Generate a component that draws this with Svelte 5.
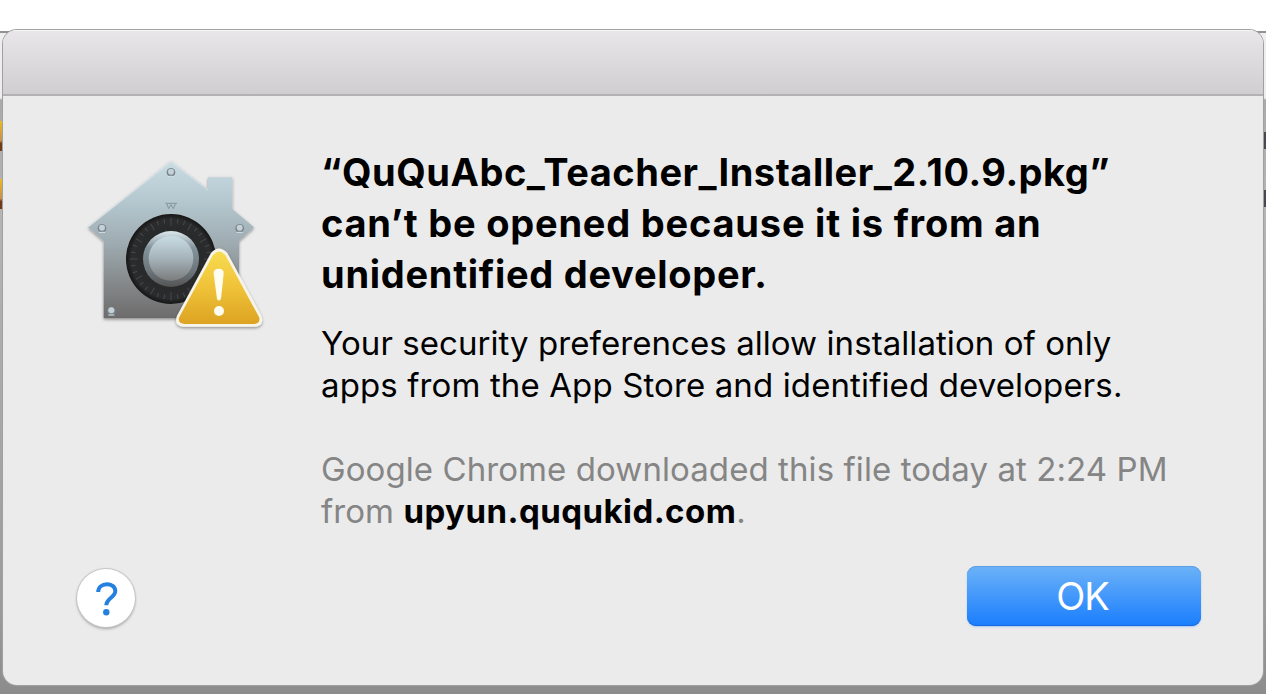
<script>
  const title = [
    { text: '“QuQuAbc_Teacher_Installer_2.10.9.pkg”', ls: 0.53 },
    { text: 'can’t be opened because it is from an', ls: 0.79 },
    { text: 'unidentified developer.', ls: 0.72 },
  ];
  const body = [
    { text: 'Your security preferences allow installation of only', ls: 0.07 },
    { text: 'apps from the App Store and identified developers.', ls: 0.12 },
  ];
  const ticks = Array.from({ length: 36 }, (_, i) => i * 10);
  const screws = [[303, 82], [96, 250], [509, 250], [124, 498]];
</script>

<div class="desktop">
  <div class="edge left"><i></i><i></i></div>
  <div class="edge right"><i></i><i></i></div>
  <div class="dialog">
    <div class="titlebar"></div>
    <div class="content">
      <svg class="icon" viewBox="0 0 630 600" aria-hidden="true">
        <defs>
          <linearGradient id="house" x1="0" y1="0" x2="0" y2="1">
            <stop offset="0" stop-color="#cbdce3" />
            <stop offset=".25" stop-color="#b5c8cf" />
            <stop offset=".5" stop-color="#a0aeb4" />
            <stop offset=".78" stop-color="#85888a" />
            <stop offset="1" stop-color="#6c6b6b" />
          </linearGradient>
          <linearGradient id="rim" x1="0" y1="0" x2="0" y2="1">
            <stop offset="0" stop-color="#dce9ef" />
            <stop offset=".3" stop-color="#83939b" />
            <stop offset=".7" stop-color="#6d777c" />
            <stop offset="1" stop-color="#545454" />
          </linearGradient>
          <linearGradient id="knob" x1="0" y1="0" x2="0" y2="1">
            <stop offset="0" stop-color="#c9dce4" />
            <stop offset=".5" stop-color="#a5b3ba" />
            <stop offset="1" stop-color="#7c7c7d" />
          </linearGradient>
          <linearGradient id="warn" x1="0" y1="0" x2="0" y2="1">
            <stop offset="0" stop-color="#f8dc50" />
            <stop offset=".5" stop-color="#efc238" />
            <stop offset="1" stop-color="#dda322" />
          </linearGradient>
          <radialGradient id="dial">
            <stop offset="0" stop-color="#222" />
            <stop offset=".88" stop-color="#2b2c2d" />
            <stop offset="1" stop-color="#151515" />
          </radialGradient>
          <filter id="shade" x="-10%" y="-10%" width="120%" height="125%">
            <feDropShadow dx="0" dy="4" stdDeviation="5" flood-color="#000" flood-opacity=".4" />
          </filter>
        </defs>
        <path d="M303 49 L414 133 V97 H487 V192 L552 247 L507 287 V520 H101 V287 L54 247 Z" fill="url(#house)" filter="url(#shade)" />
        <path d="M56 245 L303 51 L414 135" fill="none" stroke="#dce7ec" stroke-width="3" opacity=".7" />
        <path d="M286 175 H321 M291 177 L296 191 L303 179 L310 191 L316 177" fill="none" stroke="#84949b" stroke-width="3" />
        {#each screws as [x, y]}
          <circle cx={x} cy={y} r="13" fill="#75848b" />
          <circle cx={x} cy={y - 2} r="9" fill="#c6d1d6" />
          <path d="M{x - 9} {y + 12} H{x + 9}" stroke="#dfe6e9" stroke-width="3" />
        {/each}
        <circle cx="303" cy="342" r="135" fill="url(#dial)" />
        {#each ticks as a}
          <path d="M303 {a % 90 === 0 ? 218 : 220} V{a % 30 === 0 ? 242 : 234}" stroke="#46494b" stroke-width="3" transform="rotate({a} 303 342)" />
        {/each}
        <circle cx="303" cy="342" r="84" fill="url(#rim)" />
        <circle cx="303" cy="340" r="67" fill="url(#knob)" />
        <path d="M423 324 Q447 297 472 324 L574 512 Q584 542 556 545 H340 Q310 542 321 512 Z" fill="#f7f4ea" filter="url(#shade)" />
        <path d="M429 330 Q447 309 466 330 L567 516 Q573 534 553 537 H343 Q321 534 328 516 Z" fill="url(#warn)" />
        <path d="M431 386 Q430 371 446 371 Q462 371 461 386 L453 461 Q446 472 441 461 Z" fill="#fffdf0" />
        <circle cx="447" cy="498" r="15" fill="#fffdf0" />
      </svg>
      <div class="message">
        <h1>
          {#each title as l}<span class="line" style="letter-spacing:{l.ls}px">{l.text}</span>{/each}
        </h1>
        <p>
          {#each body as l}<span class="line" style="letter-spacing:{l.ls}px">{l.text}</span>{/each}
        </p>
        <p class="source">
          <span class="line">Google Chrome downloaded this file today at 2:24 PM</span>
          <span class="line">from <b>upyun.ququkid.com</b>.</span>
        </p>
      </div>
    </div>
    <div class="actions">
      <button class="help" aria-label="Help">
        <svg viewBox="0 0 60 60" width="60" height="60" aria-hidden="true">
          <path d="M22.2 24 C22.2 13.8 39.3 13.8 39.3 23 C39.3 29.5 30.3 30 30.3 37.3" fill="none" stroke="#2580df" stroke-width="4" />
          <circle cx="30.3" cy="44.3" r="3.2" fill="#2580df" />
        </svg>
      </button>
      <button class="ok">OK</button>
    </div>
  </div>
</div>

<style>
  :global(body) { margin: 0; background: #fff; }
  .desktop {
    position: relative; box-sizing: border-box; width: 1266px; height: 694px; overflow: hidden;
    padding: 30px 3px 0; font-family: Inter, "Liberation Sans", sans-serif; color: #000;
    background: linear-gradient(#fff 31px, #929292 31px 33px, #eee 33px 98px, #aaa 100px, #b5b5b5 210px, #9b9b9b 610px, #8c8c8c 694px);
  }
  .edge { position: absolute; top: 121px; width: 3px; display: flex; flex-direction: column; gap: 28px; }
  .edge i { display: block; height: 30px; background: linear-gradient(#eabb22, #c79050 65%, #6f3b1b 75%); }
  .left { left: 0; }
  .right { right: 0; top: 132px; gap: 41px; }
  .right i { height: 17px; background: #46494f; }
  .dialog {
    position: relative; box-sizing: border-box; width: 1260px; height: 655px; border-radius: 14px;
    background: #ebebeb; overflow: hidden; box-shadow: 0 0 0 1px #a0a0a0;
    display: flex; flex-direction: column;
  }
  .titlebar {
    flex: none; box-sizing: border-box; height: 66px; border-bottom: 2px solid #b3b1b3;
    border-top: 1px solid #f8f7f8; background: linear-gradient(#e8e6e8, #d0ced0);
  }
  .content { display: flex; gap: 41px; padding: 49px 0 0 67px; height: 423px; box-sizing: border-box; }
  .icon { flex: none; width: 210px; height: 200px; }
  .message { padding-top: 2px; }
  .line { display: block; white-space: nowrap; }
  h1 { margin: 0; font-size: 38px; font-weight: 700; line-height: 51px; }
  p { margin: 22px 0 0; font-size: 33px; line-height: 42px; }
  .source { margin-top: 42px; color: #858585; letter-spacing: .08px; }
  .source b { color: #000; font-weight: 700; letter-spacing: .45px; }
  .actions { display: flex; justify-content: space-between; align-items: flex-start; padding: 47px 62px 0 74px; }
  button { font: inherit; border: 0; padding: 0; }
  .help {
    width: 58px; height: 58px; margin-top: 3px; border-radius: 50%; background: #fff; display: flex;
    align-items: center; justify-content: center; box-shadow: 0 0 1px 1px #c4c4c4, 0 2px 3px rgba(0, 0, 0, .3);
  }
  .help svg { flex: none; }
  .ok {
    width: 234px; height: 60px; border-radius: 9px; color: #fff; font-size: 38px; line-height: 60px;
    letter-spacing: -1px; padding-right: 3px;
    background: linear-gradient(#6cb2f8, #1a7efd);
    box-shadow: inset 0 1px 0 #5d9fe2, inset 0 -1px 0 #1768da, 0 1px 2px #a9c8f5;
  }
</style>
